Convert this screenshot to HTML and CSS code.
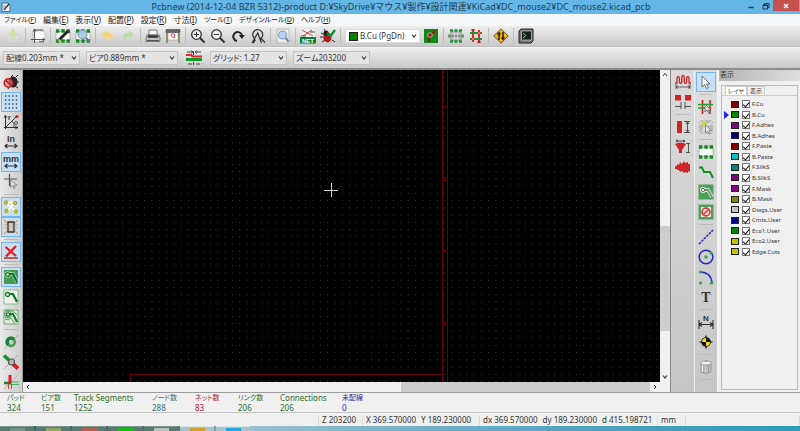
FILE: index.html
```html
<!DOCTYPE html>
<html lang="ja">
<head>
<meta charset="utf-8">
<title>Pcbnew</title>
<link rel="stylesheet" href="styles.css">
</head>
<body>
<svg class="defs" aria-hidden="true">
  <defs>
    <symbol id="chev" viewBox="0 0 6 6"><path d="M1 1.500 3 4 5 1.500" fill="none" stroke="#333" stroke-width="1.200"/></symbol>
    <symbol id="chip" viewBox="0 0 16 16"><rect x="1" y="3.500" width="14" height="9" fill="#f8fbf8" stroke="#8a9a8a" stroke-width=".6"/><path d="M1 3h14M1 13h14" stroke="#118a22" stroke-width="3.500" stroke-dasharray="3.400 1.900"/></symbol>
  </defs>
</svg>

<header class="titlebar">
  <svg class="app-icon" viewBox="0 0 10 10"><path d="M1 1h6l2 2v6.500H1z" fill="#eef3f5" stroke="#667"/><path d="M3 8 8 2" stroke="#333" stroke-width="1.300"/><path d="M2 4h3M2 6h2" stroke="#6a9"/></svg>
  <h1>Pcbnew (2014-12-04 BZR 5312)-product D:¥SkyDrive¥マウス¥製作¥設計関連¥KiCad¥DC_mouse2¥DC_mouse2.kicad_pcb</h1>
  <div class="window-buttons">
    <button aria-label="最小化"><svg viewBox="0 0 8 8"><path d="M1.500 5.500h5" stroke="#234" stroke-width="1.500"/></svg></button>
    <button aria-label="元に戻す"><svg viewBox="0 0 8 8"><path d="M1 3h4.500v4H1zM2.500 3V1.500H7v4H5.500M1 3.500h4.500" fill="none" stroke="#234" stroke-width="1"/></svg></button>
    <button class="close" aria-label="閉じる"><svg viewBox="0 0 8 8"><path d="M2 2l4 4M6 2 2 6" stroke="#fff" stroke-width="1.300"/></svg></button>
  </div>
</header>

<nav class="menubar">
  <button class="kana">ファイル(<u>F</u>)</button><button>編集(<u>E</u>)</button><button>表示(<u>V</u>)</button><button>配置(<u>P</u>)</button><button>設定(<u>R</u>)</button><button>寸法(<u>I</u>)</button><button class="kana">ツール(<u>T</u>)</button><button class="kana">デザインルール(<u>D</u>)</button><button class="kana">ヘルプ(<u>H</u>)</button>
</nav>

<div class="toolbar main-tools">
  <button class="tool" aria-label="保存"><svg viewBox="0 0 16 16"><path d="M2 9l2-3h8l2 3v5H2z" fill="#e4e6e0" stroke="#c4c8c0" stroke-width=".7"/><path d="M2 9.500h12V14H2z" fill="#d6d9d2"/><path d="M6 1h4v5h3L8 10.500 3 6h3z" fill="#cfe3a8"/></svg></button>
  <i class="sep"></i>
  <button class="tool" aria-label="ページ設定"><svg viewBox="0 0 16 16"><path d="M3 3h10l2 2v9H3z" fill="#fdfdfd" stroke="#999" stroke-width=".5"/><path d="M4.500 1v14M1 11.500h14M4.500 2h9" stroke="#444" stroke-width=".9"/><path d="M3 3.500 4.500 1 6 3.500M12.500 10l2.500 1.500-2.500 1.500" fill="none" stroke="#444" stroke-width=".8"/><path d="M9 13.500h5" stroke="#777" stroke-width="1.500"/></svg></button>
  <i class="sep"></i>
  <button class="tool" aria-label="モジュールエディタ"><svg viewBox="0 0 16 16"><use href="#chip"/><path d="M4 12 12.500 3.500" stroke="#222" stroke-width="2.800"/><path d="m11 3 2.500 2.500L15 4l-2.500-2.500z" fill="#333"/><path d="m3 13.500 1-3 2 2z" fill="#e0c060"/></svg></button>
  <button class="tool" aria-label="モジュールビューア"><svg viewBox="0 0 16 16"><use href="#chip"/><circle cx="7.500" cy="6.500" r="4.500" fill="#9fc6e6" fill-opacity=".9" stroke="#8193a5"/><path d="m11 10 4 4" stroke="#64738a" stroke-width="2.200"/></svg></button>
  <i class="sep"></i>
  <button class="tool" aria-label="元に戻す"><svg viewBox="0 0 16 16"><path d="M7 2 2 6.500 7 11V8.500c3 0 4 1 3 5C15 10 13 4.500 7 4.500z" fill="#f2d468"/></svg></button>
  <button class="tool" aria-label="やり直し"><svg viewBox="0 0 16 16"><path d="m9 2 5 4.500L9 11V8.500c-3 0-4 1-3 5C1 10 3 4.500 9 4.500z" fill="#b4dfa6"/></svg></button>
  <i class="sep"></i>
  <button class="tool" aria-label="印刷"><svg viewBox="0 0 16 16"><path d="M4 2h8v5H4z" fill="#f8f8f8" stroke="#555" stroke-width=".8"/><path d="M2 7h12l1 3v3.500H1V10z" fill="#bfc0c0" stroke="#555" stroke-width=".7"/><path d="M3 7.500h10v2H3zM2 12.500h12" fill="#333" stroke="#555"/></svg></button>
  <button class="tool" aria-label="プロット"><svg viewBox="0 0 16 16"><path d="M3 4h10v8H3z" fill="#fff" stroke="#a98" stroke-width=".6"/><path d="M1 1.500h14v3H1z" fill="#5d6876" stroke="#333" stroke-width=".5"/><path d="M2 5v10M14 5v10" stroke="#8c7750" stroke-width="1.600"/><path d="M6 6h3.500v4L7 9z" fill="none" stroke="#d34" stroke-width=".8"/></svg></button>
  <i class="sep"></i>
  <button class="tool" aria-label="ズームイン"><svg viewBox="0 0 16 16"><circle cx="6.500" cy="6.500" r="4.800" fill="#eee" stroke="#333" stroke-width="1.300"/><path d="M4 6.500h5M6.500 4v5" stroke="#333"/><path d="m10 10 4.500 4.500" stroke="#333" stroke-width="2"/></svg></button>
  <button class="tool" aria-label="ズームアウト"><svg viewBox="0 0 16 16"><circle cx="6.500" cy="6.500" r="4.800" fill="#eee" stroke="#333" stroke-width="1.300"/><path d="M4 6.500h5" stroke="#333"/><path d="m10 10 4.500 4.500" stroke="#333" stroke-width="2"/></svg></button>
  <button class="tool" aria-label="再描画"><svg viewBox="0 0 16 16"><path d="M7 13A4.500 4.500 0 1 1 12 7" fill="none" stroke="#222" stroke-width="2"/><path d="M8.800 7h6L12 11z" fill="#222"/></svg></button>
  <button class="tool" aria-label="自動ズーム"><svg viewBox="0 0 16 16"><path d="M4.500 10.500A5 5 0 1 1 11 10.500" fill="none" stroke="#333" stroke-width="1.300"/><path d="M2 15 7.800 5l3.700 10M5.500 11.500 3 15M10.500 10l4.500 4.500" fill="none" stroke="#333" stroke-width="1.300"/></svg></button>
  <i class="sep"></i>
  <button class="tool" aria-label="検索"><svg viewBox="0 0 16 16"><path d="M2 1h12v14H2z" fill="#e8eaec" stroke="#a9adb0" stroke-width=".7"/><circle cx="7.500" cy="7" r="4" fill="#b4d5f0" stroke="#8fa3b8" stroke-width="1.200"/><path d="m10.500 10 3 3.500" stroke="#7389a5" stroke-width="2"/></svg></button>
  <i class="sep"></i>
  <button class="tool" aria-label="ネットリスト"><svg viewBox="0 0 16 16"><rect x="1" y="1" width="14" height="8" fill="#e9eee9"/><path d="m2 2 11 6M3 8l9-6" stroke="#c33" stroke-width=".9"/><path d="M1 8h5M10 4h5" stroke="#333" stroke-width=".8"/><rect y="9" width="16" height="6.500" fill="#0b7a35"/><text x="8" y="14.600" text-anchor="middle" class="net-label">NET</text></svg></button>
  <button class="tool" aria-label="DRC"><svg viewBox="0 0 16 16"><path d="M1 5l4 2M0 9h4M2 14l3-2M12 12l3 2M4 1l2 3" stroke="#222"/><ellipse cx="7.500" cy="9.500" rx="4" ry="5" fill="#b8141c"/><circle cx="6" cy="5" r="2.500" fill="#222"/><path d="M7 5l3.500 3L15 2" fill="none" stroke="#138a2a" stroke-width="2.400"/></svg></button>
  <i class="sep"></i>
  <div class="combo layer-combo"><span class="combo-swatch"></span><select aria-label="レイヤ"><option>B.Cu (PgDn)</option></select><svg class="chev"><use href="#chev"/></svg></div>
  <button class="tool" aria-label="レイヤペア"><svg viewBox="0 0 16 16"><path d="M1 1h14v14H1z" fill="#0c8a17"/><path d="M6 14V9l6-6" fill="none" stroke="#a01212" stroke-width="2.200"/><circle cx="7" cy="7" r="2.300" fill="#961414" stroke="#ddd" stroke-width=".7"/></svg></button>
  <i class="sep"></i>
  <button class="tool" aria-label="モジュールモード"><svg viewBox="0 0 16 16"><path d="M3 4h10v8H3z" fill="#f5f5f5" stroke="#666" stroke-width=".8"/><path d="M2 2.500h12M2 13.500h12" stroke="#19903a" stroke-width="2.600" stroke-dasharray="3 1.500"/><path d="M1 8h14M5 5v6M8 5v6M11 5v6" stroke="#555" stroke-width=".8"/><path d="M1 6.500v3M15 6.500v3" stroke="#19903a" stroke-width="1.500"/></svg></button>
  <button class="tool" aria-label="配線モード"><svg viewBox="0 0 16 16"><path d="M5 2v12M11 2v12" stroke="#d9141c" stroke-width="1.800"/><path d="M2 5h12M2 11h12" stroke="#18983a" stroke-width="1.800"/><circle cx="5" cy="11" r="1.300" fill="#fff" stroke="#d11"/><circle cx="11" cy="5" r="1.300" fill="#fff" stroke="#d11"/><path d="M5 1v2M11 13v2" stroke="#d11" stroke-width="3"/></svg></button>
  <i class="sep"></i>
  <button class="tool" aria-label="高速アクセス"><svg viewBox="0 0 16 16"><path d="m8 .8 7.200 7.200L8 15.200.8 8z" fill="#f2b21c" stroke="#4b3710" stroke-width=".8"/><path d="M6 12V5M10 4v7" stroke="#222" stroke-width="1.500"/><path d="M3.800 6.500 6 3.500l2.200 3zM7.800 9.500 10 12.500l2.200-3z" fill="#222"/></svg></button>
  <i class="sep"></i>
  <button class="tool" aria-label="コンソール"><svg viewBox="0 0 16 16"><path d="m1 3 2-2h12v12l-2 2H1z" fill="#777" stroke="#222"/><path d="M3.500 3h10v9h-10z" fill="#142119" stroke="#ccc" stroke-width=".7"/><path d="m5 5 3 2.500L5 10" fill="none" stroke="#7bcf98"/></svg></button>
</div>

<div class="toolbar option-tools">
  <div class="combo"><select aria-label="配線幅"><option>配線0.203mm *</option></select><svg class="chev"><use href="#chev"/></svg></div>
  <div class="combo wide"><select aria-label="ビア径"><option>ビア0.889mm *</option></select><svg class="chev"><use href="#chev"/></svg></div>
  <button class="tool" aria-label="自動配線幅"><svg viewBox="0 0 16 16"><path d="M0 5h5l2 1.500h9" fill="none" stroke="#e0262c" stroke-width="2.200"/><path d="M0 9.500h16" stroke="#17962a" stroke-width="3"/><path d="M1 2h5M10 2h5M2 14h4M10 14h4M7.500 1v4M7.500 12v3" stroke="#333" stroke-width=".9"/><path d="m5 .5 2 1.500-2 1.500M11 .5 9 2l2 1.500" fill="none" stroke="#333" stroke-width=".8"/></svg></button>
  <div class="combo"><select aria-label="グリッド"><option>グリッド: 1.27</option></select><svg class="chev"><use href="#chev"/></svg></div>
  <div class="combo"><select aria-label="ズーム"><option>ズーム203200</option></select><svg class="chev"><use href="#chev"/></svg></div>
</div>

<main class="workspace">
  <div class="side left">
    <button class="tool" aria-label="DRCオフ"><svg viewBox="0 0 16 16"><path d="M8 3l2-2M13 3l2-2M13 8h3M12 12l3 2M6 13l-1 2" stroke="#222"/><ellipse cx="10" cy="8" rx="4.500" ry="5.500" fill="#222"/><circle cx="5.500" cy="9" r="4.300" fill="#c88" fill-opacity=".7" stroke="#c11c22" stroke-width="1.600"/><path d="m2.500 6 6 6" stroke="#c11c22" stroke-width="1.600"/></svg></button>
    <button class="tool on" aria-label="グリッド表示"><svg viewBox="0 0 16 16"><path d="M2 2h13M2 6h13M2 10h13M2 14h13" stroke="#2c456a" stroke-width="1.400" stroke-dasharray="1.400 2.200"/></svg></button>
    <button class="tool" aria-label="極座標"><svg viewBox="0 0 16 16"><path d="M2.500 15V2M1 13.500h14M2.500 13.500 13 3" fill="none" stroke="#333"/><path d="M1 4 2.500 1 4 4M12 12l3 1.500L12 15M9 7q3 2 2 6" fill="none" stroke="#333" stroke-width=".8"/><circle cx="14" cy="2.500" r="1.500" fill="#e11"/><text x="5" y="6" class="icon-letter">r</text><circle cx="13" cy="9" r="1.500" fill="none" stroke="#555"/></svg></button>
    <button class="tool" aria-label="インチ"><svg viewBox="0 0 16 16"><text x="8" y="8" text-anchor="middle" class="unit">In</text><path d="M2 12h12M4.500 10 2 12l2.500 2M11.500 10l2.500 2-2.500 2" fill="none" stroke="#333" stroke-width="1.200"/></svg></button>
    <button class="tool on" aria-label="ミリメートル"><svg viewBox="0 0 16 16"><text x="8" y="8" text-anchor="middle" class="unit">mm</text><path d="M2 12h12M4.500 10 2 12l2.500 2M11.500 10l2.500 2-2.500 2" fill="none" stroke="#234" stroke-width="1.200"/></svg></button>
    <button class="tool" aria-label="カーソル形状"><svg viewBox="0 0 16 16"><path d="M1 5h13M6.500 0v12" stroke="#555" stroke-width="1.200"/><path d="M7.500 5.500v8l2-1.800 1.500 3 1.200-.8L11 11.200h3z" fill="#ddd" stroke="#777" stroke-width=".8"/></svg></button>
    <i class="hsep"></i>
    <button class="tool on" aria-label="ラッツネスト"><svg viewBox="0 0 16 16"><path d="M1 1h14v14H1z" fill="#d3dddd"/><path d="m3 4 10 8M4 13l8-10M3 4l9-1" stroke="#fff" stroke-width="1.500"/><g fill="#d7d31a" stroke="#798015" stroke-width=".7"><circle cx="3" cy="3.500" r="1.700"/><circle cx="12" cy="4" r="1.700"/><circle cx="3.500" cy="12" r="1.700"/><circle cx="13" cy="12.500" r="1.700"/></g></svg></button>
    <button class="tool on" aria-label="モジュールラッツネスト"><svg viewBox="0 0 16 16"><path d="M1 1h14v14H1z" fill="#d7dee0"/><path d="m1 1 4 4M15 1l-4 4M1 15l4-4M15 15l-4-4M1 6h4M1 9h4M11 6h4M11 9h4" stroke="#e79a6a" stroke-width="1.200"/><path d="M5 3h6v10H5z" fill="#c9c5bd" stroke="#333" stroke-width="1.300"/></svg></button>
    <i class="hsep"></i>
    <button class="tool on" aria-label="自動削除"><svg viewBox="0 0 16 16"><path d="M2.500 3 13 12M13 2 3 12.500" stroke="#d51d22" stroke-width="2.300"/><path d="M1 14h14" stroke="#c21" stroke-width="1.500"/></svg></button>
    <i class="hsep"></i>
    <button class="tool on" aria-label="ゾーン塗りつぶし"><svg viewBox="0 0 16 16"><path d="M1 1h14v14H1z" fill="#479a50"/><path d="M5 5h5l4 8" fill="none" stroke="#b5dcb8" stroke-width="3.600"/><circle cx="4.500" cy="5.500" r="3.200" fill="#b5dcb8"/><path d="M5 5h5l4 8" fill="none" stroke="#137323" stroke-width="2.200"/><circle cx="4.500" cy="5.500" r="1.900" fill="#fff" stroke="#137323" stroke-width="1.300"/></svg></button>
    <button class="tool" aria-label="ゾーン非表示"><svg viewBox="0 0 16 16"><path d="M1 1h14v14H1z" fill="#eef3ee" stroke="#72af78" stroke-width=".8"/><path d="M5 5h5l4 8" fill="none" stroke="#137323" stroke-width="2.200"/><circle cx="4.500" cy="5.500" r="2" fill="#fff" stroke="#137323" stroke-width="1.300"/></svg></button>
    <button class="tool" aria-label="ゾーン外形"><svg viewBox="0 0 16 16"><path d="M1 1h14v14H1z" fill="#dcebdc" stroke="#55a05d" stroke-width=".8"/><path d="M2 10q4 2 6-1l4 6M3 1q8 0 11 5" fill="none" stroke="#55a05d"/><path d="M5 5h5l4 8" fill="none" stroke="#137323" stroke-width="2"/><circle cx="5" cy="5.500" r="3.500" fill="none" stroke="#4d9c58"/><circle cx="5" cy="5.500" r="1.700" fill="#fff" stroke="#137323" stroke-width="1.300"/></svg></button>
    <i class="hsep"></i>
    <button class="tool" aria-label="ビア表示"><svg viewBox="0 0 16 16"><path d="M1 15 15 1" stroke="#999" stroke-width=".7"/><circle cx="8" cy="8" r="3.800" fill="none" stroke="#4d9d61" stroke-width="2.800"/><path d="M4 12A5.300 5.300 0 0 1 12 4L9.500 6.500A2 2 0 0 0 6.500 9.500z" fill="#17803a"/></svg></button>
    <button class="tool" aria-label="配線表示"><svg viewBox="0 0 16 16"><path d="M1 15 15 1" stroke="#999" stroke-width=".7"/><path d="m1 1.500 6 5.500" stroke="#13912c" stroke-width="3.500"/><path d="m10 10 5 4.500" stroke="#e11820" stroke-width="3.800"/><circle cx="8.500" cy="8" r="3" fill="#bbb" stroke="#555" stroke-width="1.200"/></svg></button>
    <button class="tool" aria-label="ハイコントラスト"><svg viewBox="0 0 16 16"><path d="M1 15 15 1" stroke="#999" stroke-width=".7"/><path d="M1 9h6" stroke="#128c2c" stroke-width="2.600"/><path d="M7 8h9M7 10.500h9" stroke="#3aa750" stroke-width=".9"/><path d="M7 1v9" stroke="#e11820" stroke-width="3"/><path d="M5.500 10v5M8.500 10v5" stroke="#e33" stroke-width=".9"/></svg></button>
  </div>

  <section class="editor">
    <svg class="canvas" role="img" aria-label="基板">
      <defs><pattern id="dots" x="4" y="7" width="7.320" height="7.240" patternUnits="userSpaceOnUse"><rect width="1" height="1" fill="#3c3c3c"/></pattern></defs>
      <rect width="100%" height="100%" fill="#000"/>
      <rect width="100%" height="100%" fill="url(#dots)"/>
      <path d="M419.500 0v400M424.500 0v400M107.500 400V304.500h312M419.500 36.500h5M419.500 180.500h5" fill="none" stroke="#690000"/>
      <text x="420" y="111" class="frame-mark">D</text><text x="420" y="255" class="frame-mark">E</text>
      <path d="M301 120.500h14M308.500 113v14" stroke="#d8d8d8"/>
    </svg>
    <div class="vscroll"><button aria-label="上へ"><svg viewBox="0 0 6 6"><path d="M1 4 3 1.500 5 4" fill="none" stroke="#444"/></svg></button><span class="track-a"></span><span class="thumb"></span><span class="track-b"></span><button aria-label="下へ"><svg viewBox="0 0 6 6"><use href="#chev"/></svg></button></div>
    <div class="hscroll"><button aria-label="左へ"><svg viewBox="0 0 6 6"><path d="M4 1 2 3l2 2" fill="none" stroke="#333"/></svg></button><span class="track-a"></span><span class="thumb"></span><button aria-label="右へ"><svg viewBox="0 0 6 6"><path d="m2 1 2 2-2 2" fill="none" stroke="#333"/></svg></button></div>
    <span class="corner"></span>
  </section>

  <div class="side micro">
    <button class="tool" aria-label="マイクロ波配線"><svg viewBox="0 0 16 16"><path d="M0 9h2V4q1.200-3 2.400 0v4q1.200 3 2.400 0V3q1.200-3 2.400 0v5q1.200 3 2.400 0V4q1.200-3 2.400 0v5H16" fill="none" stroke="#cf242a" stroke-width="1.300"/><path d="M1 10v5M15 10v5M1 13h14M3 11.500 1 13l2 1.500M13 11.500l2 1.500-2 1.500" fill="none" stroke="#444" stroke-width=".8"/></svg></button>
    <button class="tool" aria-label="ギャップ"><svg viewBox="0 0 16 16"><path d="M0 1h6v5.500H0zM10 1h6v5.500h-6z" fill="#cf242a"/><path d="M6 8v7M10 8v7M0 12.500h6M10 12.500h6" stroke="#444" stroke-width=".9"/></svg></button>
    <i class="hsep"></i>
    <button class="tool" aria-label="スタブ"><svg viewBox="0 0 16 16"><path d="M2 2h5v12H2z" fill="#cf242a"/><path d="M9 2.500h6M9 13.500h6M12.500 3v10M11 5l1.500-2L14 5M11 11l1.500 2 1.500-2" fill="none" stroke="#444" stroke-width=".9"/></svg></button>
    <button class="tool" aria-label="円弧スタブ"><svg viewBox="0 0 16 16"><path d="M0 5q5-3 11 0l-4 6v3H4v-3z" fill="#cf242a"/><path d="M1 2h9M3 1 1 2l2 1M8 1l2 1-2 1M11 4.500h4M11 13.500h4M13.500 5v8" fill="none" stroke="#444" stroke-width=".9"/></svg></button>
    <button class="tool" aria-label="多角形"><svg viewBox="0 0 16 16"><path d="M0 7h2V5l2 1 1-3 2 2 2-3 1 2 3-1v2h2v8l-2-1v2l-3-1-1 1-2-2-2 1-1-2H2v-1H0z" fill="#cf242a"/></svg></button>
  </div>

  <div class="side edit">
    <button class="tool on" aria-label="選択"><svg viewBox="0 0 16 16"><path d="M4 2v11l2.700-2.400 1.800 4 1.900-1-1.800-3.600H12z" fill="#f7f7f7" stroke="#555" stroke-width=".8"/></svg></button>
    <i class="hsep"></i>
    <button class="tool" aria-label="ネットハイライト"><svg viewBox="0 0 16 16"><path d="M4.500 1v14M12 1v14" stroke="#e01820" stroke-width="1.600"/><path d="M0 5.500h15M0 9h7" stroke="#13a834" stroke-width="1.600"/><path d="M7 5v8l2-1.800 1.500 3 1.200-.8L10.500 11H13z" fill="#ddd" stroke="#666" stroke-width=".8"/></svg></button>
    <button class="tool" aria-label="ローカルラッツネスト"><svg viewBox="0 0 16 16"><path d="M1 1h14v14H1z" fill="#b9bcb7"/><path d="m1 1 14 14M15 1 1 15M6 1v14M1 5h14" stroke="#f7f7ef" stroke-width=".8"/><circle cx="6" cy="5" r="2" fill="#d5d31e"/><path d="M7.500 6v8l2-1.800 1.500 3 1.200-.8L11 11.500h2.500z" fill="#eee" stroke="#777" stroke-width=".8"/></svg></button>
    <i class="hsep"></i>
    <button class="tool" aria-label="モジュール追加"><svg viewBox="0 0 16 16"><use href="#chip"/></svg></button>
    <button class="tool" aria-label="配線追加"><svg viewBox="0 0 16 16"><path d="M1 3.500h3l2 4.500h6l3 6" fill="none" stroke="#139226" stroke-width="2"/></svg></button>
    <button class="tool" aria-label="ゾーン追加"><svg viewBox="0 0 16 16"><path d="M.5.5h15v15H.5z" fill="#4fa058"/><path d="M5 6h5l4 7" fill="none" stroke="#e3ece3" stroke-width="3.500"/><circle cx="5" cy="6" r="3" fill="#e3ece3"/><path d="M5 6h5l4 7" fill="none" stroke="#779080" stroke-width="1.800"/><circle cx="5" cy="6" r="1.700" fill="#fff" stroke="#777"/></svg></button>
    <button class="tool" aria-label="キープアウト"><svg viewBox="0 0 16 16"><path d="M.5.5h15v15H.5z" fill="#4fa058"/><path d="M3 3h10v10H3z" fill="#f2eeee"/><circle cx="8" cy="8" r="4" fill="#f7dada" stroke="#d62b2b" stroke-width="1.500"/><path d="m10.500 5.500-5 5" stroke="#d62b2b" stroke-width="1.500"/></svg></button>
    <i class="hsep"></i>
    <button class="tool" aria-label="線"><svg viewBox="0 0 16 16"><path d="M1 15 15 1" stroke="#2525c8" stroke-width="1.500" stroke-dasharray="2.500 1"/></svg></button>
    <button class="tool" aria-label="円"><svg viewBox="0 0 16 16"><circle cx="8" cy="8" r="6.800" fill="none" stroke="#2525c8" stroke-width="1.500"/><circle cx="8" cy="8" r="1.700" fill="#3b9c49"/><circle cx="13" cy="4" r="1.500" fill="#3b9c49"/></svg></button>
    <button class="tool" aria-label="円弧"><svg viewBox="0 0 16 16"><path d="M2 3q11 0 12 11" fill="none" stroke="#2525c8" stroke-width="1.500"/><g fill="#3b9c49"><circle cx="2.500" cy="3" r="1.600"/><circle cx="2.500" cy="14" r="1.600"/><circle cx="13.500" cy="14" r="1.600"/></g></svg></button>
    <button class="tool" aria-label="テキスト"><svg viewBox="0 0 16 16"><text x="8" y="13" text-anchor="middle" class="big-t">T</text></svg></button>
    <i class="hsep"></i>
    <button class="tool" aria-label="寸法線"><svg viewBox="0 0 16 16"><path d="M1 6v9M15 6v9M1 10.500h14M4 8.500l-3 2 3 2M12 8.500l3 2-3 2" fill="none" stroke="#333" stroke-width="1.100"/><text x="8" y="7" text-anchor="middle" class="small-n">N</text></svg></button>
    <button class="tool" aria-label="ターゲット"><svg viewBox="0 0 16 16"><path d="M8 1.500v13M1.500 8h13" stroke="#111" stroke-width="1.200"/><circle cx="8" cy="8" r="4.800" fill="#111"/><path d="M8 8V4a4 4 0 0 0-4 4zM8 8v4a4 4 0 0 0 4-4z" fill="#eedb13"/></svg></button>
    <i class="hsep"></i>
    <button class="tool" aria-label="削除"><svg viewBox="0 0 16 16"><path d="M3 4h10v9q-5 3-10 0z" fill="#c0c0bb" stroke="#888" stroke-width=".7"/><path d="M5.500 6v8M10.500 6v8" stroke="#999"/><path d="M4.700 6v7" stroke="#fff"/><ellipse cx="8" cy="4" rx="5.500" ry="2" fill="#eee" stroke="#888" stroke-width=".7"/><circle cx="8" cy="2" r="1" fill="#999"/></svg></button>
    <i class="hsep"></i>
  </div>

  <aside class="layers">
    <h2>表示</h2>
    <div class="layers-body">
      <div class="tabs"><button class="active">レイヤ</button><button>表示</button></div>
      <div class="layer-list">
        <div class="layer"><span class="swatch maroon"></span><label><input type="checkbox" checked>F.Cu</label></div>
        <div class="layer current"><span class="swatch green"></span><label><input type="checkbox" checked>B.Cu</label></div>
        <div class="layer"><span class="swatch purple"></span><label><input type="checkbox" checked>F.Adhes</label></div>
        <div class="layer"><span class="swatch navy"></span><label><input type="checkbox" checked>B.Adhes</label></div>
        <div class="layer"><span class="swatch maroon"></span><label><input type="checkbox" checked>F.Paste</label></div>
        <div class="layer"><span class="swatch cyan"></span><label><input type="checkbox" checked>B.Paste</label></div>
        <div class="layer"><span class="swatch teal"></span><label><input type="checkbox" checked>F.SilkS</label></div>
        <div class="layer"><span class="swatch purple"></span><label><input type="checkbox" checked>B.SilkS</label></div>
        <div class="layer"><span class="swatch purple"></span><label><input type="checkbox" checked>F.Mask</label></div>
        <div class="layer"><span class="swatch olive"></span><label><input type="checkbox" checked>B.Mask</label></div>
        <div class="layer"><span class="swatch silver"></span><label><input type="checkbox" checked>Dwgs.User</label></div>
        <div class="layer"><span class="swatch navy"></span><label><input type="checkbox" checked>Cmts.User</label></div>
        <div class="layer"><span class="swatch green"></span><label><input type="checkbox" checked>Eco1.User</label></div>
        <div class="layer"><span class="swatch yellow"></span><label><input type="checkbox" checked>Eco2.User</label></div>
        <div class="layer"><span class="swatch yellow"></span><label><input type="checkbox" checked>Edge.Cuts</label></div>
      </div>
    </div>
  </aside>
</main>

<dl class="info">
  <div class="c-green"><dt>パッド</dt><dd>324</dd></div>
  <div class="c-green"><dt>ビア数</dt><dd>151</dd></div>
  <div class="c-green"><dt lang="en">Track Segments</dt><dd>1252</dd></div>
  <div class="c-teal"><dt>ノード数</dt><dd>288</dd></div>
  <div class="c-red"><dt>ネット数</dt><dd>83</dd></div>
  <div class="c-green"><dt>リンク数</dt><dd>206</dd></div>
  <div class="c-green"><dt lang="en">Connections</dt><dd>206</dd></div>
  <div class="c-blue"><dt>未配線</dt><dd>0</dd></div>
</dl>

<footer class="status">
  <span></span>
  <span>Z 203200</span>
  <span class="split"><b>X 369.570000</b><b>Y 189.230000</b></span>
  <span class="split"><b>dx 369.570000</b><b>dy 189.230000</b><b>d 415.198721</b></span>
  <span>mm</span>
  <span></span>
</footer>

<div class="taskbar">
  <i></i><i class="t-khaki"></i><i class="t-red"></i><i class="t-green"></i><i class="t-pale"></i><i class="t-open t-gold"></i><i class="t-open t-sky"></i>
</div>
</body>
</html>
```

FILE: styles.css
```css
* { box-sizing: border-box; }

body {
  margin: 0;
  min-height: 100vh;
  display: flex;
  flex-direction: column;
  overflow: hidden;
  background: #f0f0f0;
  color: #333;
  font: 8px/10px "Noto Sans", "Noto Sans CJK JP", sans-serif;
}

button, select, input { font: inherit; color: inherit; margin: 0; }
button { border: 0; padding: 0; background: none; }
.defs { position: absolute; width: 0; height: 0; }

/* Title bar */
.titlebar { display: flex; align-items: center; height: 14px; background: #64b6e7; color: #1f4156; }
.app-icon { width: 10px; height: 10px; margin-left: 1px; }
.titlebar h1 { flex: 1; margin: 0; padding-left: 48px; text-align: center; font-size: 9px; font-weight: 400; line-height: 14px; white-space: nowrap; }
.window-buttons { display: flex; align-self: stretch; padding-right: 1px; }
.window-buttons button { width: 15px; height: 11px; display: grid; place-items: center; }
.window-buttons svg { width: 8px; height: 8px; }
.window-buttons .close { width: 26px; background: #c75050; }

/* Menu bar */
.menubar { display: flex; gap: 7px; height: 11px; padding: 0 4px; background: #f5f6f7; color: #222; }
.menubar button { line-height: 11px; white-space: nowrap; font-feature-settings: "palt"; }
.menubar .kana { font-size: 7px; }

/* Toolbars */
.toolbar { display: flex; align-items: center; border-top: 1px solid #f6f6f6; border-bottom: 1px solid #bdbdbd; background: linear-gradient(#ededed, #c9c9c9); }
.main-tools { height: 22px; padding-left: 3px; }
.option-tools { height: 23px; padding-left: 3px; gap: 6px; border-bottom: 2px solid #8c8c8c; }
.tool { width: 20px; height: 20px; flex: none; display: grid; place-items: center; }
.tool svg { width: 16px; height: 16px; }
.sep { width: 1px; height: 16px; margin: 0 2px; background: #bcbcbc; }
.combo { position: relative; display: flex; align-items: center; width: 77px; height: 14px; border: 1px solid #c4c4c4; background: #e4e4e4; }
.combo.wide { width: 92px; }
.combo select { appearance: none; width: 100%; height: 12px; padding: 0 9px 0 2px; border: 0; background: none; line-height: 12px; font-feature-settings: "palt"; }
.chev { position: absolute; right: 2px; top: 3px; width: 6px; height: 6px; pointer-events: none; }
.layer-combo { width: 75px; margin: 0 1px 0 2px; background: #fff; border-color: #ddd; }
.combo-swatch { flex: none; width: 9px; height: 9px; margin-left: 3px; border: 1px solid #222; background: #008400; }
.net-label { font: 700 6px "Liberation Sans", sans-serif; fill: #fff; }
.icon-letter { font: 700 7px "Liberation Sans", sans-serif; fill: #333; }
.unit { font: 700 9px "Liberation Sans", sans-serif; fill: #333; }
.big-t { font: 700 14px "Liberation Serif", serif; fill: #333; }
.small-n { font: 700 8px "Liberation Sans", sans-serif; fill: #333; }

/* Workspace */
.workspace { flex: 1; display: flex; min-height: 0; border-bottom: 1px solid #9d9d9d; }
.side { flex: none; display: flex; flex-direction: column; align-items: center; padding-top: 2px; width: 23px; background: linear-gradient(90deg, #e9e9e9, #cbcbcb); }
.side .on { background: #c5dff5; outline: 1px solid #78b4ec; outline-offset: -1px; }
.hsep { flex: none; width: 14px; height: 1px; margin: 2px 0; background: #bbb; }
.left { border-right: 1px solid #999; }
.micro { width: 24px; border-left: 1px solid #888; background: linear-gradient(#dadada, #c6c6c6); }
.edit { border-left: 1px solid #eee; background: linear-gradient(#dedede, #c6c6c6); }

.editor { flex: 1; min-width: 0; display: grid; grid-template: minmax(0, 1fr) 10px / minmax(0, 1fr) 10px; }
.canvas { width: 100%; height: 100%; }
.frame-mark { font: 6px "Liberation Sans", sans-serif; fill: #900; }
.vscroll, .hscroll { display: flex; background: #f0f0f0; }
.vscroll { flex-direction: column; }
.vscroll button, .hscroll button { width: 10px; height: 10px; display: grid; place-items: center; }
.vscroll svg, .hscroll svg { width: 6px; height: 6px; }
.thumb { background: #cdcdcd; }
.vscroll .track-a { flex: 146; }
.vscroll .thumb { flex: 106; }
.vscroll .track-b { flex: 41; }
.hscroll .track-a { flex: 368; }
.hscroll .thumb { flex: 249; }
.corner { background: #f0f0f0; }

/* Layer manager */
.layers { flex: none; width: 83px; display: flex; flex-direction: column; border-left: 2px solid #f4f4f4; background: #f0f0f0; font-size: 6px; line-height: 8px; }
.layers h2 { margin: 0; padding-left: 1px; height: 11px; font-size: 7px; font-weight: 400; line-height: 9px; background: linear-gradient(90deg, #b4b4b4, #dedede); }
.layers-body { flex: 1; display: flex; flex-direction: column; margin: 4px 2px 2px 2px; border: 1px solid #bbb; }
.tabs { display: flex; padding: 0 3px; height: 10px; border-bottom: 1px solid #ccc; }
.tabs button { width: 18px; border: 1px solid #ccc; border-bottom: 0; line-height: 8px; font-feature-settings: "palt"; }
.tabs .active { width: 22px; background: #fff; }
.layer-list { display: grid; grid-auto-rows: 1fr; height: 158px; margin-top: 3px; padding-left: 9px; }
.layer { position: relative; display: flex; align-items: center; gap: 3px; }
.current::before { content: ""; position: absolute; left: -7px; border: 4px solid transparent; border-left: 5px solid #2020e8; border-right: 0; }
.swatch { width: 8px; height: 7px; border: 1px solid #222; }
.maroon { background: #840000; } .green { background: #008400; } .purple { background: #840084; }
.navy { background: #000084; } .cyan { background: #00c2c2; } .teal { background: #008484; }
.olive { background: #848400; } .silver { background: #c2c2c2; } .yellow { background: #c2c200; }
.layer label { display: flex; align-items: center; gap: 2px; }
.layer input { appearance: none; display: grid; place-items: center; width: 8px; height: 8px; border: 1px solid #777; background: #fff; }
.layer input:checked::before { content: ""; width: 3px; height: 5px; border: solid #111; border-width: 0 1px 1px 0; transform: rotate(40deg); }

/* Board totals */
.info { display: grid; grid-template-columns: 34px 33px 78px 43px 43px 42px 62px 1fr; height: 20px; margin: 0; padding-left: 7px; border-bottom: 1px solid #c4c4c4; line-height: 10px; white-space: nowrap; }
.info dt { font-size: 7px; line-height: 10px; font-feature-settings: "palt"; }
.info dt:lang(en) { font-size: 8px; }
.info dd { margin: 0; line-height: 9px; }
.c-green { color: #2d6e2d; } .c-teal { color: #3a6f78; } .c-red { color: #a8232c; } .c-blue { color: #2a2a9c; }

/* Status bar */
.status { display: grid; grid-template-columns: 319px 44px 117px 178px 28px 1fr; height: 13px; padding-top: 2px; white-space: nowrap; }
.status > span { padding-left: 3px; border-right: 1px solid #dcdcdc; }
.status .split { display: flex; gap: 5px; }
.status b { font-weight: 400; }

/* Desktop taskbar */
.taskbar { display: flex; gap: 2px; height: 5px; background: linear-gradient(90deg, #3d5c58, #537577 22%, #9cc0cf 31%, #78b1c6 50%, #4ba2bd 75%, #2f9bb8); }
.taskbar i { width: 34px; background: #587a72; border-top: 1px solid #7d9890; }
.taskbar i::before { content: ""; display: block; width: 15px; height: 3px; margin: 1px auto 0; background: #78908a; }
.taskbar .t-khaki::before { background: #93a462; }
.taskbar .t-red::before { background: #b4604f; }
.taskbar .t-green::before { background: #10c010; }
.taskbar .t-pale::before { background: #b8c4bd; }
.taskbar .t-open { background: #a8c4cb; border-color: #dce9ec; }
.taskbar .t-gold::before { background: #c9a52c; }
.taskbar .t-sky::before { background: #25a5df; }
```
